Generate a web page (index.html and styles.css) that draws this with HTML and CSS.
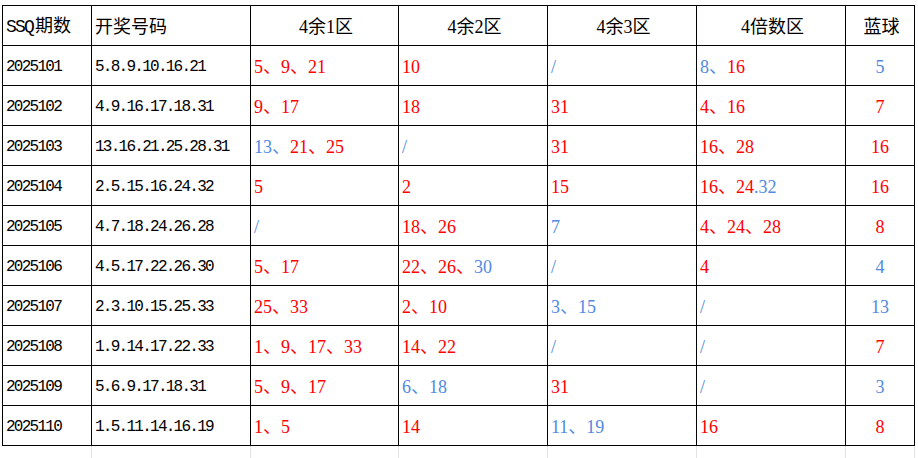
FILE: index.html
```html
<!DOCTYPE html>
<html lang="zh">
<head>
<meta charset="utf-8">
<title>SSQ</title>
<link rel="stylesheet" href="styles.css">
</head>
<body>
<table class="grid">
<colgroup>
<col class="c1"><col class="c2"><col class="c3"><col class="c4"><col class="c5"><col class="c6"><col class="c7">
</colgroup>
<thead>
<tr>
<th class="h-left"><span class="lat">SSQ</span>期数</th>
<th class="h-left">开奖号码</th>
<th><span class="d">4</span>余<span class="d">1</span>区</th>
<th><span class="d">4</span>余<span class="d">2</span>区</th>
<th><span class="d">4</span>余<span class="d">3</span>区</th>
<th><span class="d">4</span>倍数区</th>
<th>蓝球</th>
</tr>
</thead>
<tbody>
<tr><td class="m">2025101</td><td class="m">5.8.9.10.16.21</td>
<td class="n r">5、9、21</td><td class="n r">10</td><td class="n b">/</td><td class="n"><span class="b">8、</span><span class="r">16</span></td><td class="n c b">5</td></tr>
<tr><td class="m">2025102</td><td class="m">4.9.16.17.18.31</td>
<td class="n r">9、17</td><td class="n r">18</td><td class="n r">31</td><td class="n r">4、16</td><td class="n c r">7</td></tr>
<tr><td class="m">2025103</td><td class="m">13.16.21.25.28.31</td>
<td class="n"><span class="b">13、</span><span class="r">21、25</span></td><td class="n b">/</td><td class="n r">31</td><td class="n r">16、28</td><td class="n c r">16</td></tr>
<tr><td class="m">2025104</td><td class="m">2.5.15.16.24.32</td>
<td class="n r">5</td><td class="n r">2</td><td class="n r">15</td><td class="n"><span class="r">16、24</span><span class="b">.32</span></td><td class="n c r">16</td></tr>
<tr><td class="m">2025105</td><td class="m">4.7.18.24.26.28</td>
<td class="n b">/</td><td class="n r">18、26</td><td class="n b">7</td><td class="n r">4、24、28</td><td class="n c r">8</td></tr>
<tr><td class="m">2025106</td><td class="m">4.5.17.22.26.30</td>
<td class="n r">5、17</td><td class="n"><span class="r">22、26、</span><span class="b">30</span></td><td class="n b">/</td><td class="n r">4</td><td class="n c b">4</td></tr>
<tr><td class="m">2025107</td><td class="m">2.3.10.15.25.33</td>
<td class="n r">25、33</td><td class="n r">2、10</td><td class="n b">3、15</td><td class="n b">/</td><td class="n c b">13</td></tr>
<tr><td class="m">2025108</td><td class="m">1.9.14.17.22.33</td>
<td class="n r">1、9、17、33</td><td class="n r">14、22</td><td class="n b">/</td><td class="n b">/</td><td class="n c r">7</td></tr>
<tr><td class="m">2025109</td><td class="m">5.6.9.17.18.31</td>
<td class="n r">5、9、17</td><td class="n b">6、18</td><td class="n r">31</td><td class="n b">/</td><td class="n c b">3</td></tr>
<tr><td class="m">2025110</td><td class="m">1.5.11.14.16.19</td>
<td class="n r">1、5</td><td class="n r">14</td><td class="n b">11、19</td><td class="n r">16</td><td class="n c r">8</td></tr>
<tr class="ghost"><td></td><td></td><td></td><td></td><td></td><td></td><td></td></tr>
</tbody>
</table>
</body>
</html>
```
FILE: styles.css
```css
html, body {
  margin: 0;
  padding: 0;
  background: #ffffff;
  overflow: hidden;
}
body {
  height: 458px;
  font-family: "Liberation Serif", "Noto Sans CJK SC", serif;
}
.grid {
  border-collapse: collapse;
  table-layout: fixed;
  width: 913px;
  margin: 5px 0 0 2px;
}
.c1 { width: 89px; }
.c2 { width: 159px; }
.c3 { width: 148px; }
.c4 { width: 149px; }
.c5 { width: 149px; }
.c6 { width: 149px; }
.c7 { width: 69px; }
.grid th, .grid td {
  border: 1px solid #000000;
  height: 37px;
  padding: 2px 0 0 3px;
  line-height: 20px;
  vertical-align: middle;
  white-space: nowrap;
  overflow: hidden;
}
.grid th {
  font-family: "Liberation Serif", "Noto Sans CJK SC", serif;
  font-weight: normal;
  font-size: 18px;
  color: #000000;
  text-align: center;
}
.grid th.h-left {
  text-align: left;
}
.lat {
  font-family: "Liberation Mono", monospace;
  letter-spacing: -1.8px;
  margin-right: 2px;
}
.grid td.m {
  font-family: "Liberation Mono", "Noto Sans CJK SC", monospace;
  font-size: 16px;
  letter-spacing: -1.74px;
  color: #000000;
}
.grid td.n {
  font-family: "Liberation Serif", "Noto Sans CJK SC", serif;
  font-size: 18px;
}
.grid td.c {
  text-align: center;
  padding-left: 0;
}
.r { color: #ff0000; }
.b { color: #5189e2; }
.grid tr.ghost td {
  border: 1px solid #e3e3e3;
  border-top: none;
  border-bottom: none;
}
.grid tr.ghost td:first-child {
  border-left: none;
}
```
